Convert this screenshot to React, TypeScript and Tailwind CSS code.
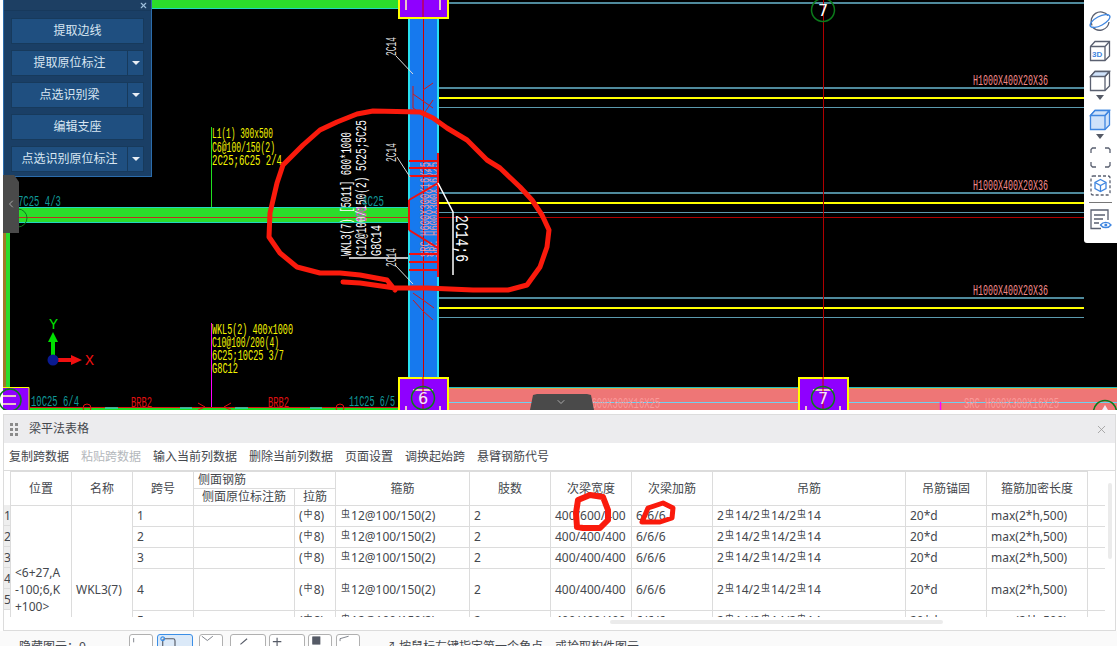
import type { ReactNode } from 'react';
import { ChevronLeft, ChevronDown, X } from 'lucide-react';

const CAD_FONT = 'Liberation Mono, monospace';

/* ── CAD canvas helpers ─────────────────────────────── */

function T({
	x,
	y,
	w,
	c,
	s = 15.5,
	r,
	children,
}: {
	x: number;
	y: number;
	w: number;
	c: string;
	s?: number;
	r?: number;
	children: string;
}) {
	return (
		<text
			x={x}
			y={y}
			fill={c}
			fontSize={s}
			fontFamily={CAD_FONT}
			textLength={w}
			lengthAdjust="spacingAndGlyphs"
			transform={r ? `rotate(${r} ${x} ${y})` : undefined}
		>
			{children}
		</text>
	);
}

function GridBox({ x, y, label }: { x: number; y: number; label: string }) {
	return (
		<g>
			<rect x={x + 1} y={y + 1} width={49} height={60} fill="#8f00ff" stroke="#ffff00" strokeWidth={2} />
			<path
				d={`M${x + 15} ${y + 13}h20M${x + 8} ${y + 29}v24M${x + 42} ${y + 29}v24M${x + 8} ${y + 36}h34`}
				stroke="#e8c4c8"
				strokeWidth={2}
				fill="none"
			/>
			<path d={`M${x + 25} ${y}v60`} stroke="#d00000" strokeWidth={1} />
			<circle cx={x + 25} cy={y + 21} r={11.5} fill="none" stroke="#0b7a1a" strokeWidth={1.5} />
			<text x={x + 25} y={y + 27} fill="#f4e8f4" fontSize={16} fontFamily="DejaVu Sans, sans-serif" textAnchor="middle">
				{label}
			</text>
		</g>
	);
}

function RightBeamLines({ y }: { y: number }) {
	return (
		<g>
			<rect x={439} y={y} width={645} height={2} fill="#4f8a9c" />
			<rect x={439} y={y + 10} width={645} height={2} fill="#ffff00" />
			<rect x={439} y={y + 20} width={645} height={1} fill="#5b9aae" />
			<T x={973} y={y - 2} w={75} c="#f08a8a">
				H1000X400X20X36
			</T>
		</g>
	);
}

function CadCanvas() {
	return (
		<svg className="absolute inset-0" width={1117} height={410} viewBox="0 0 1117 410">
			<rect x={0} y={0} width={3} height={410} fill="#fff" />

			{/* upper right beam rows */}
			<rect x={439} y={2} width={645} height={2} fill="#4f8a9c" />
			<RightBeamLines y={87} />
			<RightBeamLines y={192} />
			<RightBeamLines y={297} />
			<path d="M439 217.500H1084" stroke="#b00000" strokeWidth={1} />
			<path d="M823.500 0V388" stroke="#b00000" strokeWidth={1} />
			<circle cx={823} cy={10} r={11.500} fill="none" stroke="#0b7a1a" strokeWidth={1.500} />
			<text x={823} y={16} fill="#fff" fontSize={16} fontFamily="DejaVu Sans, sans-serif" textAnchor="middle">
				7
			</text>

			{/* pink beam along the bottom */}
			<rect x={449} y={387} width={668} height={1} fill="#20c0c0" />
			<rect x={449} y={388} width={668} height={22} fill="#ee7676" />
			<rect x={449} y={388} width={668} height={1} fill="#e8a040" />
			<rect x={449} y={402} width={668} height={1} fill="#6fd0f0" />
			<path d="M940.500 402V410" stroke="#ff00ff" strokeWidth={1.500} />
			<T x={964} y={408} w={95} c="#fb9a9a">
				SRC H600X300X16X25
			</T>
			<T x={565} y={408} w={95} c="#fb9a9a">
				SRC H600X300X16X25
			</T>
			<circle cx={1105} cy={412} r={11.500} fill="none" stroke="#0b7a1a" strokeWidth={1.500} />
			<path d="M1105 405L1102 410H1108Z" fill="#f4e8f4" />

			{/* green beams */}
			<rect x={152} y={0} width={246} height={8} fill="#2bdd2b" />
			<rect x={152} y={8} width={246} height={1} fill="#20d8c0" />
			<rect x={3} y={207} width={405} height={16} fill="#2bdd2b" />
			<rect x={3} y={207} width={405} height={1} fill="#20d8c0" />
			<rect x={3} y={222} width={405} height={1} fill="#20d8c0" />
			<path d="M3 217.500H408" stroke="#c03020" strokeWidth={1} />
			<rect x={3} y={223} width={3} height={170} fill="#a07a28" />
			<rect x={6} y={223} width={4} height={170} fill="#2bdd2b" />
			<circle cx={18} cy={218} r={9} fill="none" stroke="#0b7a1a" strokeWidth={1} />

			{/* blue column */}
			<rect x={408} y={18} width={31} height={360} fill="#1679ee" />
			<rect x={408} y={18} width={2} height={360} fill="#28e0f0" />
			<rect x={437} y={18} width={2} height={360} fill="#28e0f0" />
			<path d="M423.500 18V378" stroke="#d00000" strokeWidth={1} />
			<path d="M413 86V108L423 115L433 100M413 300L423 311L433 320M413 94L433 108" stroke="#d01818" strokeWidth={1} fill="none" />
			<path d="M413 293L423 300L434 308M423 90L433 83" stroke="#d01818" strokeWidth={1} fill="none" />

			{/* pink labels on the column */}
			<T x={429} y={257} w={95} c="#e898a8" s={12} r={-90}>
				SRC H600X300X16X25
			</T>
			<T x={438} y={257} w={95} c="#e898a8" s={12} r={-90}>
				SRC H600X300X16X25
			</T>

			{/* side rebar marks */}
			<path d="M409 161H438M409 168H438M409 176H438M409 254H438M409 262H438M409 270H438" stroke="#f01010" strokeWidth={2} />
			<path d="M438 153V277" stroke="#f01010" strokeWidth={2} />
			<path d="M409 200V230M409 200L438 183M409 230L438 248M438 183L423 192" stroke="#f01010" strokeWidth={2} fill="none" />

			{/* leaders */}
			<path d="M438 183L453 212V275" stroke="#fff" strokeWidth={1.500} fill="none" />
			<path d="M396 56L413 74M397 157L410 177M395 265L413 284" stroke="#ddd" strokeWidth={1} fill="none" />
			<path d="M349 258H408" stroke="#fff" strokeWidth={1.500} />
			<T x={396} y={56} w={19} c="#ddd" s={14} r={-90}>
				2C14
			</T>
			<T x={396} y={162} w={19} c="#ddd" s={14} r={-90}>
				2C14
			</T>
			<T x={396} y={267} w={19} c="#ddd" s={14} r={-90}>
				2C14
			</T>
			<T x={456} y={215} w={47} c="#fff" s={18} r={90}>
				2C14;6
			</T>

			{/* beam annotation, rotated */}
			<T x={351} y={256} w={124} c="#fff" s={15} r={-90}>
				WKL3(7) [5011] 600*1000
			</T>
			<T x={366} y={256} w={136} c="#fff" s={15} r={-90}>
				C12@100/150(2) 5C25;5C25
			</T>
			<T x={381} y={256} w={31} c="#fff" s={15} r={-90}>
				G8C14
			</T>
			<T x={366} y={222} w={15} c="#e040e0" s={15} r={-90}>
				100
			</T>
			<T x={362} y={206} w={22} c="#109a9a">
				4C25
			</T>

			{/* yellow labels */}
			<path d="M211.500 127V207" stroke="#20e020" strokeWidth={1} />
			<T x={212} y={138} w={61} c="#f4f400">
				L1(1) 300x500
			</T>
			<T x={212} y={152} w={63} c="#f4f400">
				C6@100/150(2)
			</T>
			<T x={212} y={165} w={70} c="#f4f400">
				2C25;6C25 2/4
			</T>
			<path d="M211.500 323V408" stroke="#ff00ff" strokeWidth={1} />
			<T x={212} y={334} w={81} c="#f4f400">
				WKL5(2) 400x1000
			</T>
			<T x={212} y={347} w={67} c="#f4f400">
				C10@100/200(4)
			</T>
			<T x={212} y={360} w={72} c="#f4f400">
				6C25;10C25 3/7
			</T>
			<T x={212} y={373} w={26} c="#f4f400">
				G8C12
			</T>
			<T x={18} y={206} w={43} c="#109a9a">
				7C25 4/3
			</T>

			{/* axes */}
			<path d="M53 356V340" stroke="#00e000" strokeWidth={4} />
			<path d="M53 332L58 342H48Z" fill="#00e000" />
			<path d="M57 360H72" stroke="#f01010" strokeWidth={4} />
			<path d="M82 360L71 355V365Z" fill="#f01010" />
			<circle cx={53} cy={360} r={5.500} fill="#0a1a90" />
			<T x={49} y={329} w={9} c="#00e000" s={15}>
				Y
			</T>
			<T x={85} y={365} w={9} c="#f01010" s={15}>
				X
			</T>

			{/* lower beam */}
			<rect x={30} y={407} width={368} height={3} fill="#20dd20" />
			<path d="M30 407.500H398" stroke="#d81010" strokeWidth={1} />
			<path d="M105 408H118M180 408H192M235 408H248M310 408H322" stroke="#20d8c0" strokeWidth={1.500} />
			<path d="M198 403L205 407L198 410M231 403L224 407L231 410" stroke="#e01010" strokeWidth={1} fill="none" />
			<circle cx={87} cy={408} r={4} fill="none" stroke="#e01010" />
			<circle cx={340} cy={408} r={4} fill="none" stroke="#e01010" />
			<T x={31} y={406} w={48} c="#109a9a">
				10C25 6/4
			</T>
			<T x={349} y={406} w={46} c="#109a9a">
				11C25 6/5
			</T>
			<T x={131} y={407} w={21} c="#e01010">
				BRB2
			</T>
			<T x={268} y={407} w={21} c="#e01010">
				BRB2
			</T>

			{/* axis boxes */}
			<GridBox x={398} y={-43} label="6" />
			<GridBox x={398} y={377} label="6" />
			<GridBox x={798} y={377} label="7" />
			<rect x={3} y={387} width={26} height={23} fill="#8f00ff" />
			<path d="M3 387.500H29V410" stroke="#ffff00" fill="none" />
			<path d="M3 396H16M3 404H16" stroke="#e8c4c8" strokeWidth={2} />
			<circle cx={10} cy={400} r={11} fill="none" stroke="#0b7a1a" strokeWidth={1.500} />

			{/* slide handle at the foot of the canvas */}
			<path d="M530 410L533 395L537 394H587L591 395L594 410Z" fill="#4a4a4a" />
		</svg>
	);
}

/* ── Floating panel ─────────────────────────────────── */

function PanelButton({ label, split }: { label: string; split?: boolean }) {
	return (
		<div className="flex h-[26px] border border-[#173a5c] bg-[#1f4f80] text-[12px] text-[#d8e6f2]">
			<div className="flex flex-1 items-center justify-center">{label}</div>
			{split && (
				<div className="flex w-[16px] items-center justify-center border-l border-[#173a5c]">
					<span className="h-0 w-0 border-x-[4px] border-t-[4px] border-x-transparent border-t-[#e8eef5]" />
				</div>
			)}
		</div>
	);
}

function RecognizePanel() {
	return (
		<div className="absolute top-0 left-[3px] flex h-[177px] w-[149px] flex-col border-x border-b border-[#2c6cab] bg-[#1a3f66]">
			<div className="flex h-[11px] shrink-0 items-center justify-end border-b border-[#17395c] bg-[#1d3f63] pr-[3px]">
				<X className="h-[9px] w-[9px] text-[#9fc0dc]" strokeWidth={3} />
			</div>
			<div className="flex flex-col gap-[6px] px-[7px] pt-[7px]">
				<PanelButton label="提取边线" />
				<PanelButton label="提取原位标注" split />
				<PanelButton label="点选识别梁" split />
				<PanelButton label="编辑支座" />
				<PanelButton label="点选识别原位标注" split />
			</div>
		</div>
	);
}

/* ── Right view toolbar ─────────────────────────────── */

const INK = '#5a6070';
const BLUE = '#3f86e0';

function CubeIcon({ fill, stroke, top }: { fill: string; stroke: string; top: string }) {
	return (
		<svg width={22} height={22} viewBox="0 0 22 22" fill="none" strokeWidth={1.300}>
			<path d="M1.500 6.500L6 1.500H20.500V16L16 20.500H1.500Z" fill={fill} stroke={stroke} />
			<path d="M1.500 6.500L6 1.500H20.500L16 6.500Z" fill={top} stroke={stroke} />
			<path d="M16 6.500V20.500M16 6.500L20.500 1.500" stroke={stroke} />
		</svg>
	);
}

function Caret() {
	return <span className="my-[3px] h-0 w-0 border-x-[4px] border-t-[5px] border-x-transparent border-t-[#555a66]" />;
}

function ViewToolbar() {
	return (
		<div className="absolute top-0 right-0 flex h-[243px] w-[33px] flex-col items-center rounded-bl-[3px] bg-white pt-[10px] pr-[1px]">
			<svg width={24} height={22} viewBox="0 0 24 22" fill="none" strokeWidth={1.300}>
				<path d="M4 15.500A9.500 9.500 0 0 1 20 5.500" stroke={INK} />
				<path d="M4.500 17A9.500 9.500 0 0 0 21 12" stroke={INK} />
				<ellipse cx={12} cy={11} rx={11} ry={4.500} transform="rotate(-28 12 11)" stroke={BLUE} />
			</svg>
			<div className="mt-[8px]">
				<svg width={22} height={22} viewBox="0 0 22 22" fill="none" strokeWidth={1.300}>
					<path d="M1.500 6.500L6 1.500H20.500V16L16 20.500H1.500Z" stroke={INK} />
					<path d="M1.500 6.500H16L20.500 1.500M16 6.500V20.500" stroke={INK} />
					<text x={3} y={17} fontSize={8} fontWeight={700} fill={BLUE} fontFamily="Liberation Sans, sans-serif">
						3D
					</text>
				</svg>
			</div>
			<div className="mt-[8px] flex flex-col items-center">
				<CubeIcon fill="#fff" stroke={INK} top="#cfe2fa" />
				<Caret />
			</div>
			<div className="mt-[6px] flex flex-col items-center">
				<CubeIcon fill="#cfe2fa" stroke={BLUE} top="#cfe2fa" />
				<Caret />
			</div>
			<div className="mt-[5px]">
				<svg width={21} height={21} viewBox="0 0 21 21" fill="none" stroke={INK} strokeWidth={1.300}>
					<path d="M1 6V2.500L2.500 1H6M15 1H18.500L20 2.500V6M20 15V18.500L18.500 20H15M6 20H2.500L1 18.500V15" />
				</svg>
			</div>
			<div className="mt-[7px]">
				<svg width={21} height={21} viewBox="0 0 21 21" fill="none" strokeWidth={1.300}>
					<rect x={1} y={1} width={19} height={19} rx={2} stroke={INK} strokeDasharray="3 2" />
					<path d="M10.500 4.500L16 7.500V13.500L10.500 16.500L5 13.500V7.500Z" stroke={BLUE} />
					<path d="M5 7.500L10.500 10.500L16 7.500M10.500 10.500V16.500" stroke={BLUE} />
				</svg>
			</div>
			<div className="mt-[6px] h-px w-[23px] bg-[#777]" />
			<div className="mt-[6px]">
				<svg width={23} height={21} viewBox="0 0 23 21" fill="none" strokeWidth={1.300}>
					<path d="M12 19.500H2V1H19V11" stroke={INK} />
					<path d="M5 6H16M5 10H14M5 14H10" stroke={INK} />
					<path d="M11.500 16C14 12.500 19.500 12.500 22 16C19.500 19.500 14 19.500 11.500 16Z" stroke={BLUE} />
					<circle cx={16.800} cy={16} r={1.500} fill={BLUE} />
				</svg>
			</div>
		</div>
	);
}

/* ── Table ──────────────────────────────────────────── */

// rebar grade marks are small raised glyphs in the source font
function Mark({ children }: { children: string }) {
	return <span className="relative top-[-3px] mx-[1px] text-[9px]">{children}</span>;
}

function Stirrup() {
	return (
		<>
			<Mark>虫</Mark>12@100/150(2)
		</>
	);
}

function Hanger() {
	return (
		<>
			2<Mark>虫</Mark>14/2<Mark>虫</Mark>14/2<Mark>虫</Mark>14
		</>
	);
}

const rows = [
	{ no: '1', h: 'h-[21px]', width: '400/600/400' },
	{ no: '2', h: 'h-[21px]', width: '400/400/400' },
	{ no: '3', h: 'h-[21px]', width: '400/400/400' },
	{ no: '4', h: 'h-[42px]', width: '400/400/400' },
	{ no: '5', h: 'h-[21px]', width: '400/400/400' },
];

const columnWidths = [61, 61, 61, 101, 41, 134, 81, 81, 81, 193, 81, 101, 17];

const th = 'border border-[#dcdcdc] p-0 text-center font-normal';
const td = 'border border-[#dcdcdc] px-[4px] py-0 text-left';

function BeamTable() {
	return (
		<table className="table-fixed border-collapse text-[12px] leading-none text-[#44474d]">
			<colgroup>
				{columnWidths.map((w, i) => (
					<col key={i} style={{ width: w }} />
				))}
			</colgroup>
			<thead>
				<tr className="h-[17px]">
					<th rowSpan={2} className={th}>位置</th>
					<th rowSpan={2} className={th}>名称</th>
					<th rowSpan={2} className={th}>跨号</th>
					<th colSpan={2} className={`${th} pl-[4px] text-left`}>侧面钢筋</th>
					<th rowSpan={2} className={th}>箍筋</th>
					<th rowSpan={2} className={th}>肢数</th>
					<th rowSpan={2} className={th}>次梁宽度</th>
					<th rowSpan={2} className={th}>次梁加筋</th>
					<th rowSpan={2} className={th}>吊筋</th>
					<th rowSpan={2} className={th}>吊筋锚固</th>
					<th rowSpan={2} className={th}>箍筋加密长度</th>
					<th rowSpan={2} className="p-0" />
				</tr>
				<tr className="h-[17px]">
					<th className={th}>侧面原位标注筋</th>
					<th className={th}>拉筋</th>
				</tr>
			</thead>
			<tbody>
				{rows.map((row, i) => (
					<tr key={row.no} className={row.h}>
						{i === 0 && (
							<>
								<td rowSpan={7} className={`${td} leading-[17px]`}>
									{'<6+27,A'}
									<br />
									-100;6,K
									<br />
									{'+100>'}
								</td>
								<td rowSpan={7} className={td}>WKL3(7)</td>
							</>
						)}
						<td className={td}>{row.no}</td>
						<td className={td} />
						<td className={td}>
							(<Mark>中</Mark>8)
						</td>
						<td className={td}>
							<Stirrup />
						</td>
						<td className={td}>2</td>
						<td className={td}>{row.width}</td>
						<td className={td}>6/6/6</td>
						<td className={td}>
							<Hanger />
						</td>
						<td className={td}>20*d</td>
						<td className={td}>max(2*h,500)</td>
						<td className="border-y border-[#dcdcdc] p-0" />
					</tr>
				))}
				{/* the last two spans lie below the visible area */}
				<tr className="h-[21px]" />
				<tr className="h-[21px]" />
			</tbody>
		</table>
	);
}

function BeamTablePanel() {
	return (
		<div className="ml-[3px] flex h-[217px] w-[1113px] shrink-0 flex-col border border-[#dcdcdc] bg-white">
			<div className="flex h-[28px] shrink-0 items-center justify-between bg-[#ececee] pr-[7px] pl-[6px]">
				<div className="flex items-center">
					<div className="grid w-[8px] grid-cols-2 gap-x-[2px] gap-y-[2px]">
						{[0, 1, 2, 3, 4, 5].map((d) => (
							<span key={d} className="h-[3px] w-[3px] bg-[#8a8a8a]" />
						))}
					</div>
					<span className="ml-[11px] text-[12px] text-[#44474d]">梁平法表格</span>
				</div>
				<X className="h-[13px] w-[13px] text-[#9a9a9a]" strokeWidth={1.500} />
			</div>
			<div className="flex h-[28px] shrink-0 items-center gap-[12px] border-b border-[#dcdcdc] pl-[5px] text-[12px] text-[#44474d]">
				<span>复制跨数据</span>
				<span className="text-[#b4b8bc]">粘贴跨数据</span>
				<span>输入当前列数据</span>
				<span>删除当前列数据</span>
				<span>页面设置</span>
				<span>调换起始跨</span>
				<span>悬臂钢筋代号</span>
			</div>
			<div className="relative flex h-[146px] shrink-0 overflow-hidden">
				<div className="w-[6px] shrink-0 pt-[34px] text-[12px] leading-[21px] text-[#44474d]">
					{rows.map((row) => (
						<div key={row.no} className="h-[21px] overflow-hidden border-b border-[#dcdcdc] bg-[#eeeeee]">
							{row.no}
						</div>
					))}
				</div>
				<BeamTable />
				<div className="absolute top-[12px] right-[3px] h-[76px] w-[4px] rounded-full bg-[#ebebeb]" />
			</div>
			<div className="mt-[3px] ml-[606px] h-[4px] w-[333px] rounded-full bg-[#ebebeb]" />
		</div>
	);
}

/* ── Status bar, cut off by the window ──────────────── */

function DrawButton({ className, children }: { className: string; children: ReactNode }) {
	return (
		<div className={`h-[24px] shrink-0 rounded-[3px] border ${className}`}>
			<svg width="100%" height={22} viewBox="0 0 36 22" preserveAspectRatio="xMinYMin" fill="none" stroke="#555a66" strokeWidth={1.200}>
				{children}
			</svg>
		</div>
	);
}

function StatusBar() {
	const plain = 'border-[#b0b0b0] bg-white';
	return (
		<div className="flex h-[15px] shrink-0 items-start overflow-hidden bg-[#fafafa] pt-[3px] text-[12px] text-[#44474d]">
			<span className="mt-[4px] ml-[19px] w-[110px] shrink-0">隐藏图元：0</span>
			<DrawButton className={`w-[24px] ${plain}`}>
				<path d="M6 5V12" />
			</DrawButton>
			<DrawButton className="ml-[4px] w-[36px] border-[#3a8ee6] bg-[#dbe9f8]">
				<rect x={5} y={4} width={13} height={12} rx={2} />
				<circle cx={5} cy={4} r={2} stroke="#3a8ee6" />
			</DrawButton>
			<DrawButton className={`ml-[6px] w-[24px] ${plain}`}>
				<path d="M3 2L12 9L21 2" />
			</DrawButton>
			<DrawButton className={`ml-[7px] w-[36px] ${plain}`}>
				<path d="M10 10L17 4" />
			</DrawButton>
			<DrawButton className={`ml-[3px] w-[36px] ${plain}`}>
				<path d="M3 7H12M7.500 3V12" />
			</DrawButton>
			<DrawButton className={`ml-[3px] w-[24px] ${plain}`}>
				<rect x={6} y={3} width={12} height={12} fill="#555a66" />
			</DrawButton>
			<DrawButton className={`ml-[4px] w-[24px] ${plain}`}>
				<path d="M5 10V6L19 2" />
			</DrawButton>
			<span className="mt-[4px] ml-[24px] whitespace-nowrap">↗ 按鼠标左键指定第一个角点，或拾取构件图元</span>
		</div>
	);
}

/* ── Freehand red marks over everything ─────────────── */

function RedMarks() {
	return (
		<svg className="pointer-events-none absolute inset-0" width={1117} height={646} viewBox="0 0 1117 646" fill="none" stroke="#fa1a0c" strokeLinejoin="round" strokeLinecap="round">
			<polyline
				strokeWidth={5}
				points="343,282 360,283 388,287 395,288 427,288 473,290 508,290 527,285 540,267 547,247 549,230 542,215 532,200 520,187 500,168 487,160 467,140 447,128 433,118 420,112 373,111 357,114 337,122 320,130 303,145 283,165 277,183 270,213 269,237 280,253 297,267 320,273 340,273 360,275 387,280 395,290"
			/>
			<polyline strokeWidth={6} points="577,527 576,513 578,500 590,495 603,497 608,510 608,520 600,528 583,528 577,527" />
			<polyline strokeWidth={5} points="642,522 648,508 663,503 673,508 672,518 660,522 642,522" />
		</svg>
	);
}

export default function App() {
	return (
		<div className="relative flex h-[646px] w-[1117px] flex-col overflow-hidden bg-white font-['Noto_Sans','Noto_Sans_CJK_SC',sans-serif]">
			<div className="relative h-[410px] shrink-0 overflow-hidden bg-black">
				<CadCanvas />
				<RecognizePanel />
				<div className="absolute top-[175px] left-[3px] flex h-[58px] w-[16px] items-center justify-center bg-[#4a4a4a] [clip-path:polygon(0_0,70%_0,100%_12%,100%_100%,0_100%)]">
					<ChevronLeft className="h-[12px] w-[12px] text-[#aaaaaa]" strokeWidth={2} />
				</div>
				<ChevronDown className="absolute top-[396px] left-[555px] h-[12px] w-[12px] text-[#aaaaaa]" strokeWidth={2} />
				<ViewToolbar />
			</div>
			<div className="h-[4px] shrink-0" />
			<BeamTablePanel />
			<StatusBar />
			<RedMarks />
		</div>
	);
}
